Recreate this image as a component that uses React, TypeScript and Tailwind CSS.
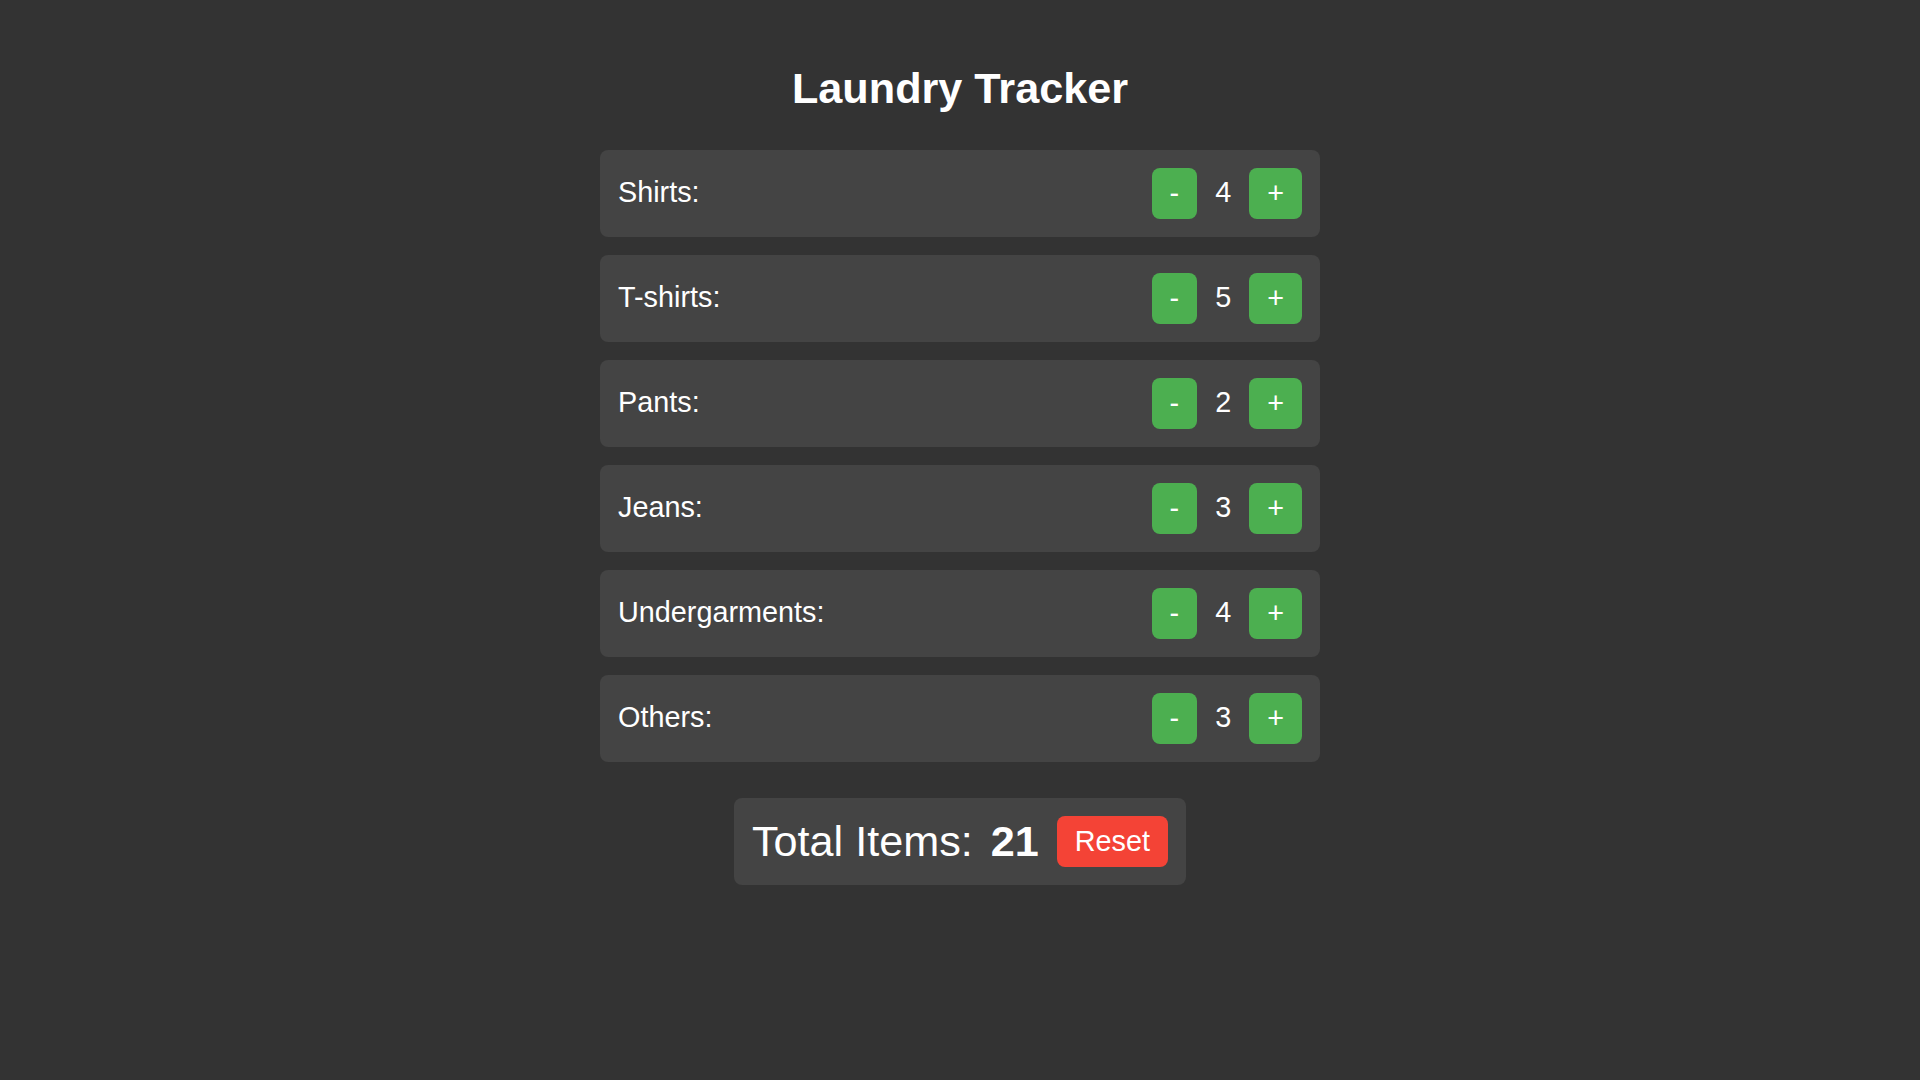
import { useState } from "react";

const initialItems = [
  { name: "Shirts", count: 4 },
  { name: "T-shirts", count: 5 },
  { name: "Pants", count: 2 },
  { name: "Jeans", count: 3 },
  { name: "Undergarments", count: 4 },
  { name: "Others", count: 3 },
];

const App = () => {
  const [items, setItems] = useState(initialItems);

  const change = (index: number, delta: number) => {
    setItems((prev) =>
      prev.map((item, i) =>
        i === index ? { ...item, count: Math.max(0, item.count + delta) } : item
      )
    );
  };

  const total = items.reduce((sum, item) => sum + item.count, 0);

  return (
    <div className="min-h-screen bg-[#333333] text-white font-['Liberation_Sans',Arial,sans-serif] pt-[64px]">
      <h1 className="text-center text-[43.2px] leading-[49px] font-bold mb-[37px]">
        Laundry Tracker
      </h1>
      <div className="w-[720px] mx-auto flex flex-col gap-[18px]">
        {items.map((item, i) => (
          <div
            key={item.name}
            className="flex items-center justify-between bg-[#444444] rounded-lg p-[18px]"
          >
            <span className="text-[28.8px] leading-[33px] -mt-[2px]">{item.name}:</span>
            <div className="flex items-center">
              <button
                onClick={() => change(i, -1)}
                className="bg-[#4caf50] text-white text-[28.8px] leading-[33px] px-[18px] py-[9px] rounded-lg"
              >
                -
              </button>
              <span className="text-[28.8px] leading-[33px] mx-[18px] -mt-[2px]">
                {item.count}
              </span>
              <button
                onClick={() => change(i, 1)}
                className="bg-[#4caf50] text-white text-[28.8px] leading-[33px] px-[18px] py-[9px] rounded-lg"
              >
                +
              </button>
            </div>
          </div>
        ))}
      </div>
      <div className="flex justify-center mt-[36px]">
        <div className="flex items-center bg-[#444444] rounded-lg p-[18px] gap-[18px]">
          <span className="text-[43.2px] leading-[49px]">Total Items:</span>
          <span className="text-[43.2px] leading-[49px] font-bold">
            {total}
          </span>
          <button
            onClick={() => setItems(items.map((item) => ({ ...item, count: 0 })))}
            className="bg-[#f44336] text-white text-[28.8px] leading-[33px] px-[18px] py-[9px] rounded-lg"
          >
            Reset
          </button>
        </div>
      </div>
    </div>
  );
};

export default App;
